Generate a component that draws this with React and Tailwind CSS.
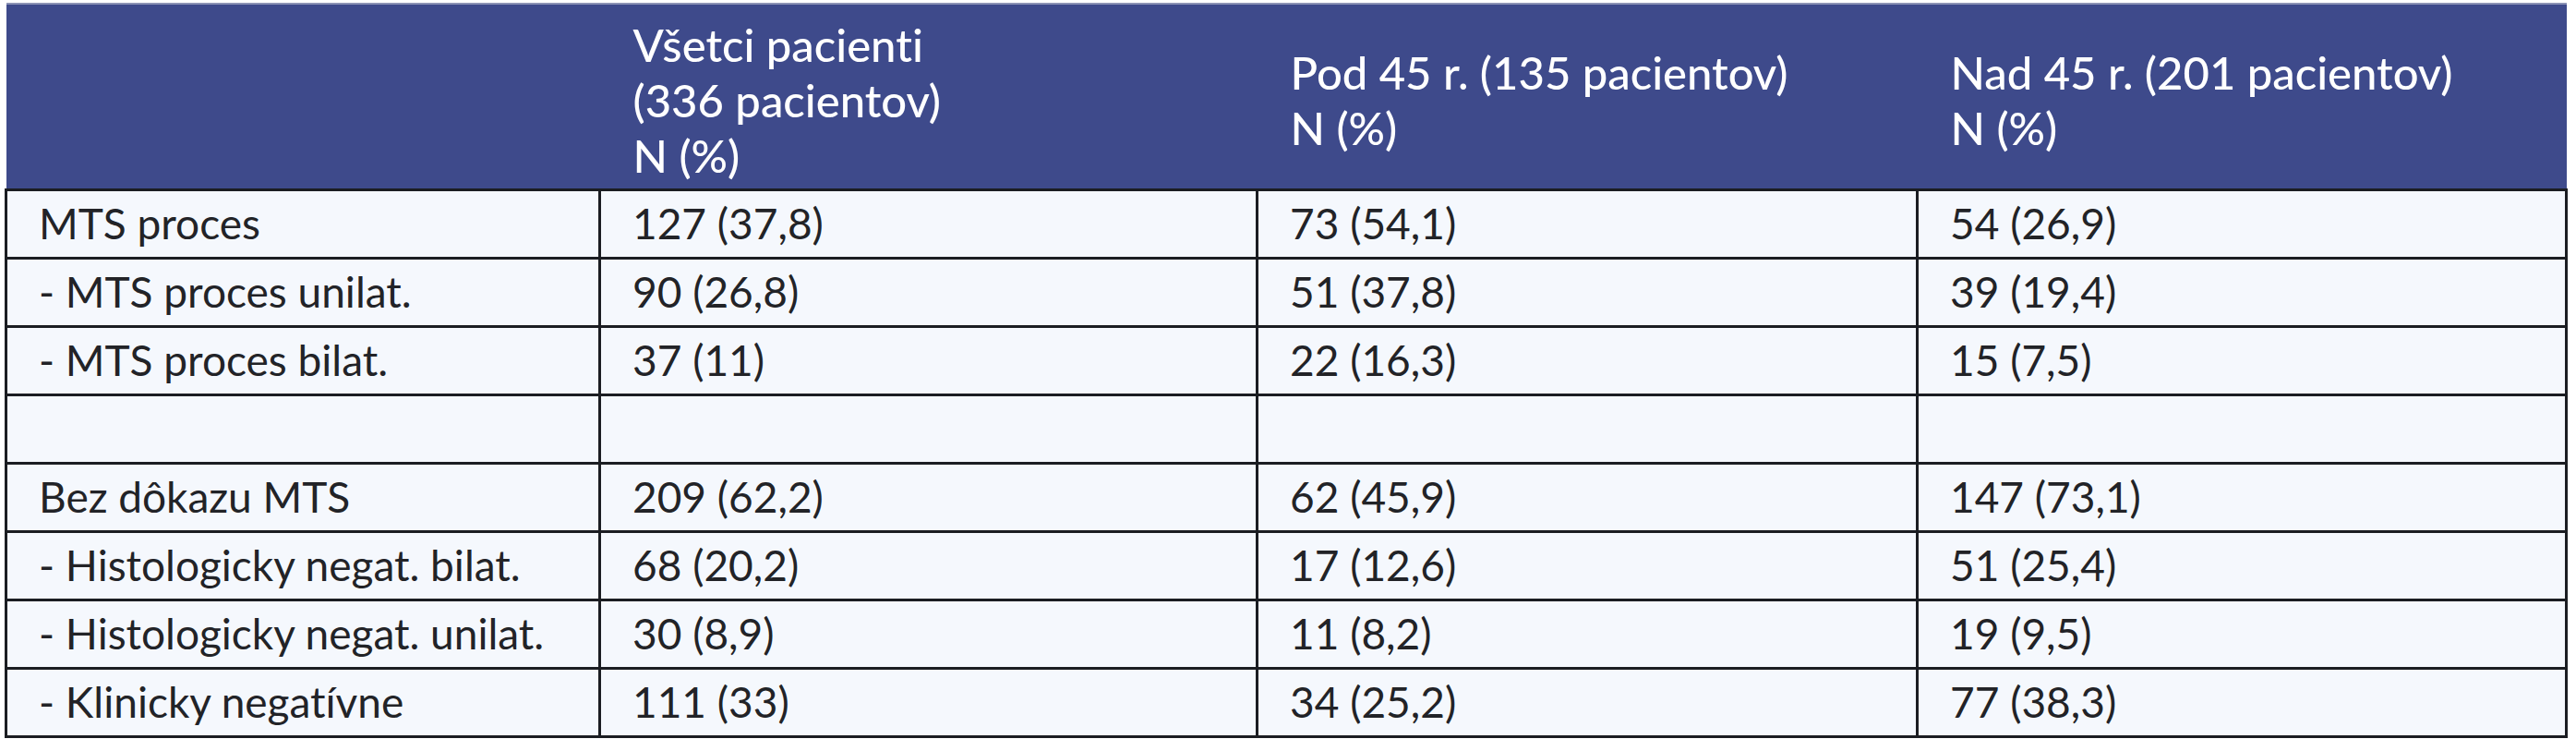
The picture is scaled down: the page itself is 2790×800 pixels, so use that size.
import React from 'react';

const HEADERS = [
  '',
  ['Všetci pacienti', '(336 pacientov)', 'N (%)'],
  ['Pod 45 r. (135 pacientov)', 'N (%)'],
  ['Nad 45 r. (201 pacientov)', 'N (%)'],
];

const ROWS = [
  ['MTS proces', '127 (37,8)', '73 (54,1)', '54 (26,9)'],
  ['- MTS proces unilat.', '90 (26,8)', '51 (37,8)', '39 (19,4)'],
  ['- MTS proces bilat.', '37 (11)', '22 (16,3)', '15 (7,5)'],
  ['', '', '', ''],
  ['Bez dôkazu MTS', '209 (62,2)', '62 (45,9)', '147 (73,1)'],
  ['- Histologicky negat. bilat.', '68 (20,2)', '17 (12,6)', '51 (25,4)'],
  ['- Histologicky negat. unilat.', '30 (8,9)', '11 (8,2)', '19 (9,5)'],
  ['- Klinicky negatívne', '111 (33)', '34 (25,2)', '77 (38,3)'],
];

export default function App() {
  return (
    <div className="w-[2790px] h-[800px] bg-white pt-[3px] pl-[5px] [font-variant-ligatures:none]" style={{ fontFamily: '"Lato", "Liberation Sans", sans-serif' }}>
      <table className="border-collapse table-fixed w-[2773px]">
        <colgroup>
          <col className="w-[643px]" />
          <col className="w-[712px]" />
          <col className="w-[715px]" />
          <col className="w-[703px]" />
        </colgroup>
        <thead>
          <tr className="h-[201px] bg-[#3e4a8b] border-t-2 border-[#8c93b5]">
            {HEADERS.map((h, i) => (
              <th key={i} className="text-left align-middle pl-[36px] pt-[8px] text-white font-medium text-[49px] leading-[60px]">
                {Array.isArray(h) && h.map((line, j) => <div key={j}>{line}</div>)}
              </th>
            ))}
          </tr>
        </thead>
        <tbody className="bg-[#f5f8fd]">
          {ROWS.map((row, i) => (
            <tr key={i} className="h-[74px]">
              {row.map((cell, j) => (
                <td key={j} className="border-[3px] border-[#1b1d22] pl-[34px] align-middle text-[46px] text-[#222327] font-normal leading-none">
                  {cell}
                </td>
              ))}
            </tr>
          ))}
        </tbody>
      </table>
    </div>
  );
}
